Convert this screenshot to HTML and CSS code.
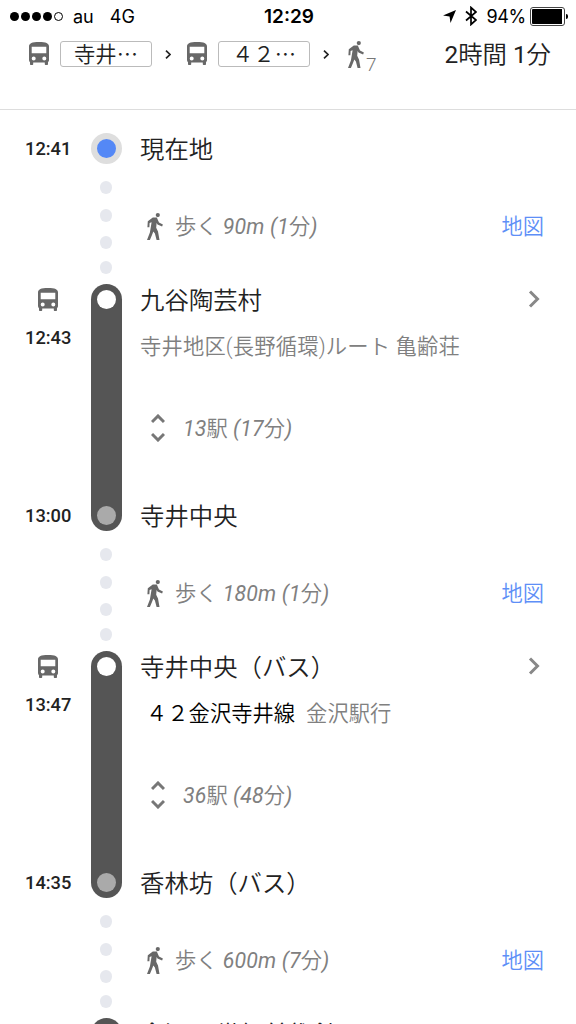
FILE: index.html
```html
<!DOCTYPE html>
<html lang="ja">
	<head>
		<meta charset="UTF-8" />
		<meta name="viewport" content="width=device-width, initial-scale=1.0" />
		<title>2時間 1分</title>
		<link rel="stylesheet" href="styles.css">
	</head>
	<body>
		<!-- shared icons -->
		<svg class="sprite">
			<symbol id="bus" viewBox="0 0 20 23">
				<path fill-rule="evenodd" d="M0 4.500C0 1.200 3 0 10 0s10 1.200 10 4.500V18c0 .9-.5 1.700-1 2.200V22c0 .6-.4 1-1 1h-1.200c-.6 0-1-.4-1-1v-1.500H4.200V22c0 .6-.4 1-1 1H2c-.6 0-1-.4-1-1v-1.800C.4 19.700 0 18.900 0 18zM2.700 4.700v6.600h14.600V4.700zM4.700 14.400a2 2 0 1 0 0 4 2 2 0 0 0 0-4zM15.300 14.400a2 2 0 1 0 0 4 2 2 0 0 0 0-4z" />
			</symbol>
			<symbol id="walk" viewBox="0 0 16 27">
				<circle cx="10.800" cy="2.100" r="2.100" />
				<path d="M5.800 4.400h4l2.200 5.100 3.900 2.100-.8 2-4.600-2.200-.9-1.400-.4 4.800 1.800 3.700L12.500 27H9.600l-1.700-6.500-1.600-2-.9 2.500L2.900 27H0l2.900-7.500 1.700-10.300-2 .9-.2 4.200H.4l.4-6.100z" />
			</symbol>
			<symbol id="next" viewBox="0 0 12 18">
				<path d="M2 1.500L9.500 9 2 16.500" fill="none" stroke="currentColor" stroke-width="3" />
			</symbol>
			<symbol id="expand" viewBox="0 0 14 28">
				<path d="M1 8l6-6 6 6M1 20l6 6 6-6" fill="none" stroke="currentColor" stroke-width="3" />
			</symbol>
		</svg>

		<div class="status">
			<div class="carrier">
				<span class="signal"><i></i><i></i><i></i><i></i><i class="empty"></i></span>
				<span>au</span>
				<span class="network">4G</span>
			</div>
			<div class="clock">12:29</div>
			<div class="power">
				<svg class="location" viewBox="0 0 13 13"><path d="M13 0L7.500 13 6.600 6.500 0 5.600z" /></svg>
				<svg class="bluetooth" viewBox="0 0 12 20"><path d="M1 5.500l10 8.500-5 4.500v-17L11 6 1 14.500" fill="none" stroke="#000" stroke-width="1.700" /></svg>
				<span class="percent">94%</span>
				<span class="battery"></span>
			</div>
		</div>

		<div class="summary">
			<svg class="bus"><use href="#bus" /></svg>
			<span class="route">寺井…</span>
			<svg class="sep" viewBox="0 0 6 9"><path d="M1 .7l4 3.800-4 3.800" fill="none" stroke="#222" stroke-width="1.700" /></svg>
			<svg class="bus"><use href="#bus" /></svg>
			<span class="route">４２…</span>
			<svg class="sep" viewBox="0 0 6 9"><path d="M1 .7l4 3.800-4 3.800" fill="none" stroke="#222" stroke-width="1.700" /></svg>
			<svg class="walk"><use href="#walk" /></svg>
			<span class="walk-min">7</span>
			<span class="total"><b>2</b>時間 <b>1</b>分</span>
		</div>

		<div class="trip">
			<div class="step origin">
				<div class="times"><span class="time">12:41</span></div>
				<div class="here"></div>
				<div class="info"><div class="name">現在地</div></div>
			</div>

			<div class="step walking">
				<div class="dots"><i></i><i></i><i></i><i></i></div>
				<div class="info">
					<svg class="walk"><use href="#walk" /></svg>
					<span class="detail">歩く <em>90m (1</em>分<em>)</em></span>
					<a class="map">地図</a>
				</div>
			</div>

			<div class="step ride">
				<div class="times">
					<svg class="bus"><use href="#bus" /></svg>
					<span class="time">12:43</span>
					<span class="time arrive">13:00</span>
				</div>
				<div class="bar"><i></i><i class="end"></i></div>
				<div class="info">
					<div class="name">九谷陶芸村 <svg class="next"><use href="#next" /></svg></div>
					<div class="line local">寺井地区(長野循環)ルート 亀齢荘</div>
					<div class="stops"><svg class="expand"><use href="#expand" /></svg><span class="detail"><em>13</em>駅 <em>(17</em>分<em>)</em></span></div>
					<div class="name last">寺井中央</div>
				</div>
			</div>

			<div class="step walking">
				<div class="dots"><i></i><i></i><i></i><i></i></div>
				<div class="info">
					<svg class="walk"><use href="#walk" /></svg>
					<span class="detail">歩く <em>180m (1</em>分<em>)</em></span>
					<a class="map">地図</a>
				</div>
			</div>

			<div class="step ride">
				<div class="times">
					<svg class="bus"><use href="#bus" /></svg>
					<span class="time">13:47</span>
					<span class="time arrive">14:35</span>
				</div>
				<div class="bar"><i></i><i class="end"></i></div>
				<div class="info">
					<div class="name">寺井中央（バス） <svg class="next"><use href="#next" /></svg></div>
					<div class="line"><span class="badge">４２金沢寺井線</span>金沢駅行</div>
					<div class="stops"><svg class="expand"><use href="#expand" /></svg><span class="detail"><em>36</em>駅 <em>(48</em>分<em>)</em></span></div>
					<div class="name last">香林坊（バス）</div>
				</div>
			</div>

			<div class="step walking">
				<div class="dots"><i></i><i></i><i></i><i></i></div>
				<div class="info">
					<svg class="walk"><use href="#walk" /></svg>
					<span class="detail">歩く <em>600m (7</em>分<em>)</em></span>
					<a class="map">地図</a>
				</div>
			</div>

			<div class="step ride">
				<div class="bar"><i></i></div>
				<div class="info"><div class="name">金沢21世紀美術館</div></div>
			</div>
		</div>
	</body>
</html>
```
FILE: styles.css
```css
* {
	box-sizing: border-box;
}
html {
	overflow: hidden;
}
body {
	margin: 0;
	width: 576px;
	height: 1024px;
	overflow: hidden;
	background: #fff;
	color: #222;
	font-family: Roboto, "Noto Sans CJK JP", sans-serif;
	font-weight: 350;
}
svg {
	display: block;
	flex: none;
	fill: currentColor;
}
.sprite {
	display: none;
}
.bus {
	width: 20px;
	height: 23px;
	color: #686868;
}
.walk {
	width: 16px;
	height: 27px;
	color: #686868;
}

/* phone status bar */
.status {
	display: grid;
	grid-template-columns: 1fr auto 1fr;
	align-items: center;
	height: 32px;
	padding: 0 8px 0 10px;
	color: #000;
	font-family: Inter, sans-serif;
	font-size: 18px;
	font-weight: 400;
}
.carrier,
.power,
.signal {
	display: flex;
	align-items: center;
}
.signal {
	gap: 2px;
	margin-right: 10px;
}
.signal i {
	width: 9px;
	height: 9px;
	border-radius: 50%;
	background: #000;
}
.signal .empty {
	background: none;
	border: 1px solid #000;
}
.network {
	margin-left: 16px;
}
.clock {
	font-size: 19px;
	font-weight: 600;
}
.power {
	justify-content: flex-end;
}
.location {
	width: 13px;
	height: 13px;
	margin-right: 9px;
}
.bluetooth {
	width: 12px;
	height: 20px;
	margin-right: 9px;
}
.percent {
	margin-right: 4px;
	letter-spacing: -.3px;
}
.battery {
	display: flex;
	align-items: center;
	width: 38px;
	height: 15px;
}
.battery::before {
	content: "";
	width: 35px;
	height: 15px;
	padding: 1px 2px 1px 1px;
	border: 1px solid #444;
	border-radius: 3px;
	background: #000 content-box;
}
.battery::after {
	content: "";
	width: 2px;
	height: 5px;
	margin-left: 1px;
	border-radius: 0 2px 2px 0;
	background: #000;
}

/* trip summary */
.summary {
	display: flex;
	align-items: flex-start;
	height: 78px;
	padding: 10px 25px 0 29px;
	border-bottom: 1px solid #ddd;
}
.route {
	width: 92px;
	height: 26px;
	margin: -1px 0 0 11px;
	border: 1px solid #bbb;
	border-radius: 3px;
	font-family: "Noto Sans CJK JP", sans-serif;
	font-size: 21.3px;
	line-height: 22px;
	text-align: center;
}
.sep {
	width: 6px;
	height: 9px;
	margin: 8px 16px 0 13px;
}
.summary .walk {
	margin: -1px 0 0 3px;
}
.walk-min {
	margin: 12px 0 0 2px;
	color: #777;
	font-size: 19px;
	line-height: 22px;
}
.total {
	margin-left: auto;
	font-size: 24.4px;
	line-height: 26px;
}
.total b {
	font-weight: 400;
}

/* timeline */
.trip {
	padding-top: 23px;
}
.step {
	display: grid;
	grid-template-columns: 90.5px 31px 1fr;
}
.times {
	grid-column: 1;
	display: flex;
	flex-direction: column;
	padding: 0 0 0 25px;
}
.time {
	height: 31px;
	font-size: 18.3px;
	font-weight: 500;
	line-height: 31px;
}
.times .bus {
	margin: 4px 0 11px 13px;
}
.arrive {
	margin-top: auto;
}
.info {
	grid-column: 3;
	padding: 0 32px 0 18.5px;
}
.name {
	display: flex;
	align-items: center;
	justify-content: space-between;
	height: 31px;
	padding-top: 1px;
	font-size: 24.4px;
	line-height: 31px;
}

.here {
	grid-column: 2;
	width: 31px;
	height: 31px;
	border: 6px solid #dedede;
	border-radius: 50%;
	background: #5488f6;
}

.walking {
	height: 120px;
}
.dots {
	grid-column: 2;
	display: flex;
	flex-direction: column;
	align-items: center;
	gap: 14.5px;
	padding-top: 17px;
}
.dots i {
	width: 12.5px;
	height: 13px;
	border-radius: 50%;
	background: #e6e8ee;
}
.dots i:last-child {
	margin-top: -3px;
}
.walking .info {
	display: flex;
	align-items: center;
	height: 124px;
	padding-left: 25px;
}
.detail {
	margin-top: -4px;
	color: #808080;
	font-size: 21.3px;
	white-space: pre;
}
.walking .detail {
	margin-left: 12.5px;
}
em {
	font-style: italic;
	font-weight: 400;
	letter-spacing: .15px;
}
.map {
	margin: -4px 0 0 auto;
	color: #5e8ff7;
	font-size: 21.3px;
}

.ride {
	height: 247px;
}
.bar {
	grid-column: 2;
	display: flex;
	flex-direction: column;
	justify-content: space-between;
	align-items: center;
	padding: 6px 0;
	border-radius: 16px;
	background: #555;
}
.bar i {
	width: 19px;
	height: 19px;
	border-radius: 50%;
	background: #fff;
}
.bar .end {
	background: #aaa;
}
.ride .info {
	display: flex;
	flex-direction: column;
}
.next {
	width: 12px;
	height: 18px;
	margin: -2px 4px 0 0;
	color: #888;
}
.line {
	height: 32px;
	margin-top: 16px;
	color: #808080;
	font-size: 21.3px;
	line-height: 32px;
}
.local {
	letter-spacing: .17px;
}
.badge {
	margin: 0 11px 0 6px;
	color: #000;
}
.stops {
	display: flex;
	align-items: center;
	height: 32px;
	margin-top: 49px;
	padding-left: 11px;
}
.expand {
	width: 14px;
	height: 28px;
	margin-right: 18px;
	color: #777;
}
.last {
	margin-top: auto;
}
```
